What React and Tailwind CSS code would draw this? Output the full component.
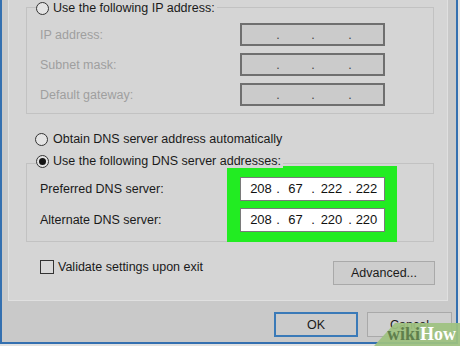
import React from "react";

function Radio({ checked }) {
  return (
    <span className="w-[13px] h-[13px] shrink-0 rounded-full border border-[#333] bg-[#e4e4e4] flex items-center justify-center">
      {checked && <span className="w-[7px] h-[7px] rounded-full bg-[#141414]" />}
    </span>
  );
}

function IpField({ parts, disabled }) {
  const widths = ["w-[30px]", "w-[31px]", "w-[33px]", "w-[29px]"];
  const box = disabled
    ? "border-2 border-[#6f6f6f] bg-[#cbcbcb] pl-[4px] h-[23px] text-[#444]"
    : "border border-[#7a7a7a] bg-white pl-[5px] h-[24px] text-[#111]";
  return (
    <div className={`w-[145px] flex items-center ${box}`}>
      {parts.map((p, i) => (
        <React.Fragment key={i}>
          <span className={`${widths[i]} text-center`}>{p}</span>
          {i < 3 && <span className="w-[4px] text-center">.</span>}
        </React.Fragment>
      ))}
    </div>
  );
}

export default function App() {
  const ipRows = ["IP address:", "Subnet mask:", "Default gateway:"];

  return (
    <div className="w-[460px] h-[346px] overflow-hidden bg-[#e2e2e2] relative font-['Liberation_Sans',Arial,sans-serif] text-[12.5px] leading-[14px] text-[#1a1a1a]">
      <div className="w-[458px] h-[344px] border-l-2 border-r-2 border-b-2 border-[#3470b0] bg-[#c9c9c9] flex flex-col">
        {/* tab page */}
        <div className="ml-[6px] w-[440px] h-[301px] shrink-0 bg-[#d5d5d5] border-l border-r border-b border-[#e0e0e0] flex flex-col">
          {/* IP group */}
          <div className="relative mt-[7px] ml-[17px] w-[408px] h-[107px] shrink-0 border border-[#c2c2c2]">
            <div className="absolute left-[9px] top-[-7px] flex items-center gap-[4px] bg-[#d5d5d5] pr-[2px] h-[14px]">
              <Radio />
              <span>Use the following IP address:</span>
            </div>
            <div className="pt-[15px] pl-[13px] flex flex-col gap-[7px]">
              {ipRows.map(label => (
                <div key={label} className="flex items-center">
                  <span className="w-[200px] text-[#9f9f9f]">{label}</span>
                  <IpField parts={["", "", "", ""]} disabled />
                </div>
              ))}
            </div>
          </div>

          {/* obtain DNS */}
          <div className="mt-[18px] ml-[26px] h-[14px] flex items-center gap-[5px]">
            <Radio />
            <span>Obtain DNS server address automatically</span>
          </div>

          {/* DNS group */}
          <div className="relative mt-[17px] ml-[17px] w-[408px] h-[79px] shrink-0 border border-[#c2c2c2]">
            <div className="absolute left-[9px] top-[-10px] flex items-center gap-[4px] bg-[#d5d5d5] pr-[2px] h-[14px]">
              <Radio checked />
              <span>Use the following DNS server addresses:</span>
            </div>
            <div className="flex pl-[13px]">
              <div className="w-[187px] pt-[13px] flex flex-col gap-[7px]">
                <div className="h-[24px] flex items-center">Preferred DNS server:</div>
                <div className="h-[24px] flex items-center">Alternate DNS server:</div>
              </div>
              <div className="mt-[2px] w-[170px] bg-[#22ec22] pt-[11px] pb-[10px] pl-[13px] flex flex-col gap-[7px] text-[13px]">
                <IpField parts={["208", "67", "222", "222"]} />
                <IpField parts={["208", "67", "220", "220"]} />
              </div>
            </div>
          </div>

          {/* validate + advanced */}
          <div className="mt-[19px] pl-[31px] pr-[12px] flex justify-between items-start">
            <div className="mt-[-1px] h-[14px] flex items-center gap-[4px]">
              <span className="w-[14px] h-[14px] border border-[#333] bg-[#d9d9d9]" />
              <span>Validate settings upon exit</span>
            </div>
            <button className="w-[102px] h-[24px] border border-[#a9a9a9] bg-[#cdcdcd] flex items-center justify-center">
              Advanced...
            </button>
          </div>
        </div>

        {/* footer */}
        <div className="pt-[11px] pr-[4px] flex justify-end gap-[9px]">
          <button className="w-[84px] h-[25px] border-2 border-[#3a7ab8] bg-[#cbcbcb] flex items-center justify-center">
            OK
          </button>
          <button className="w-[85px] h-[25px] border border-[#a9a9a9] bg-[#cfcfcf] flex items-center justify-center">
            Cancel
          </button>
        </div>
      </div>

      {/* wikiHow mark */}
      <div className="absolute right-0 bottom-0 w-[86px] h-[23px] bg-[rgba(158,194,128,0.93)] [clip-path:polygon(21px_0,100%_0,100%_100%,0_100%)] pl-[13px] pt-[2px] font-['Liberation_Serif',serif] font-bold text-[18px] leading-[18px]">
        <span className="text-[#5f7f4c]">wiki</span>
        <span className="text-white">How</span>
      </div>
    </div>
  );
}
